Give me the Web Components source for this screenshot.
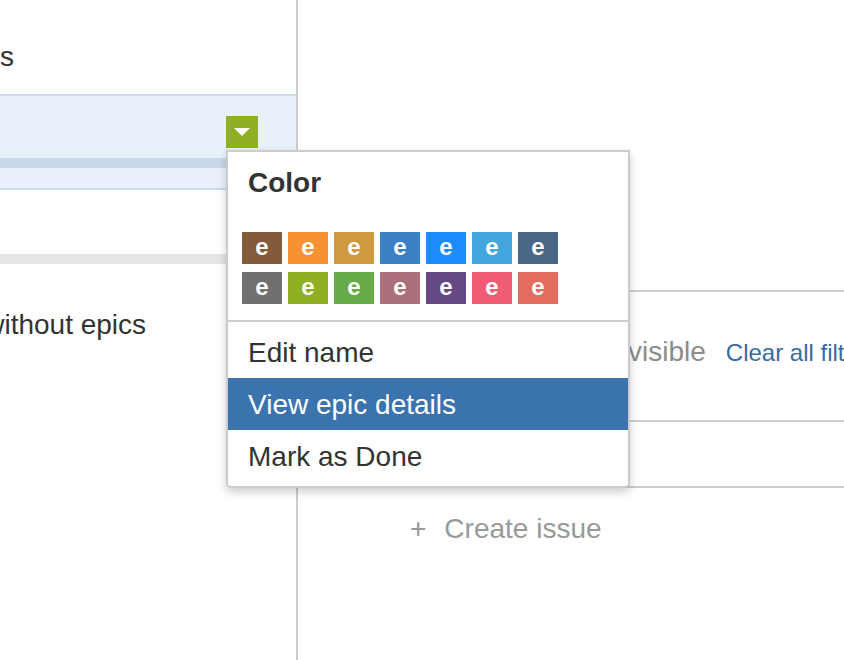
<!DOCTYPE html>
<html><head><meta charset="utf-8"><title>Board</title>
<style>
html,body{margin:0;height:100%;overflow:hidden;background:#fff}
body{font:28px/32px "Liberation Sans",Arial,sans-serif;color:#333}
</style></head><body>
<x-board>
  <x-epic-panel></x-epic-panel>
  <x-issue-pane></x-issue-pane>
  <x-color-menu></x-color-menu>
</x-board>
<script>
function def(name, html, build){
  customElements.define(name, class extends HTMLElement{
    constructor(){super();this.attachShadow({mode:'open'}).innerHTML=html;}
    connectedCallback(){ if(build) build(this); }
  });
}
def('x-board',`<style>
:host{display:flex;position:relative;width:844px;height:660px;overflow:hidden}
::slotted(x-color-menu){position:absolute;left:226px;top:150px}
</style><slot></slot>`);

def('x-epic-panel',`<style>
:host{display:block;width:296px;height:660px;border-right:2px solid #ccc;flex:none;overflow:hidden}
.title{height:94px;box-sizing:border-box;padding-top:41px}
.sel{height:96px;box-sizing:border-box;border-top:2px solid #cddcec;border-bottom:2px solid #cddcec;background:#e8f1fa;padding-top:20px}
.btn{display:flex;align-items:center;justify-content:center;width:32px;height:32px;margin-left:226px;background:#8eb021}
.btn i{display:block;width:0;height:0;border:8px solid transparent;border-top-color:#fff;border-bottom:0}
.bar{height:10px;margin-top:10px;background:#cbd8e9}
.gap{height:64px}
.grey{height:10px;background:#e5e5e5}
.none{margin:45px 0 0 -15.8px;white-space:nowrap}
</style>
<div class="title">s</div>
<div class="sel"><div class="btn"><i></i></div><div class="bar"></div></div>
<div class="gap"></div>
<div class="grey"></div>
<div class="none">without epics</div>`);

def('x-issue-pane',`<style>
:host{display:block;flex:1;min-width:0;padding-top:290px;overflow:hidden;white-space:nowrap}
.row{border-top:2px solid #ccc;box-sizing:border-box}
.filters{height:130px;padding:44px 0 0 330px;display:flex;align-items:baseline;color:#8c8c8c}
.filters a{margin-left:20px;font-size:24px;color:#3b6a9f}
.mid{height:66px}
.create{height:84px;padding:25px 0 0 112px;color:#999;display:flex;align-items:baseline}
.create b{font-weight:400;margin-right:18px}
</style>
<div class="row filters"><span>visible</span><a>Clear all filters</a></div>
<div class="row mid"></div>
<div class="row create"><b>+</b><span>Create issue</span></div>`);

def('x-swatch',`<style>
:host{display:flex;align-items:center;justify-content:center;width:40px;height:32px;background:var(--c);color:#fff;font:700 24px/32px "Liberation Sans",Arial,sans-serif}
span{position:relative;top:-1px}
</style><span>e</span>`);

def('x-menu-item',`<style>
:host{display:block;height:52px;box-sizing:border-box;padding:11px 0 0 20px;font-size:28px;line-height:32px;color:#333;white-space:nowrap}
:host([active]){background:#3b73af;color:#fff}
</style><slot></slot>`);

const colors=['#815b3a','#f79232','#cf9a3f','#3b7fc4','#1b8cff','#42a5dc','#4a6785','#707070','#8eb021','#67ab49','#ac707a','#654982','#f15c75','#e36b5f'];
def('x-color-menu',`<style>
:host{display:block;width:404px;height:338px;box-sizing:border-box;background:#fff;border:2px solid #ccc;border-radius:0 0 5px 5px;box-shadow:0 4px 10px rgba(0,0,0,.2);color:#333}
h3{margin:0;font:700 28px/32px "Liberation Sans",Arial,sans-serif;padding:15px 0 0 20px;height:80px;box-sizing:border-box}
.grid{display:grid;grid-template-columns:repeat(7,40px);grid-auto-rows:32px;gap:8px 6px;padding-left:14px;height:88px;border-bottom:2px solid #ccc}
.list{padding-top:4px}
</style>
<h3>Color</h3>
<div class="grid"></div>
<div class="list">
<x-menu-item>Edit name</x-menu-item>
<x-menu-item active>View epic details</x-menu-item>
<x-menu-item>Mark as Done</x-menu-item>
</div>`, el=>{
  const g=el.shadowRoot.querySelector('.grid');
  if(g.children.length) return;
  colors.forEach(c=>{const s=document.createElement('x-swatch');s.style.setProperty('--c',c);g.appendChild(s);});
});
</script>
</body></html>
